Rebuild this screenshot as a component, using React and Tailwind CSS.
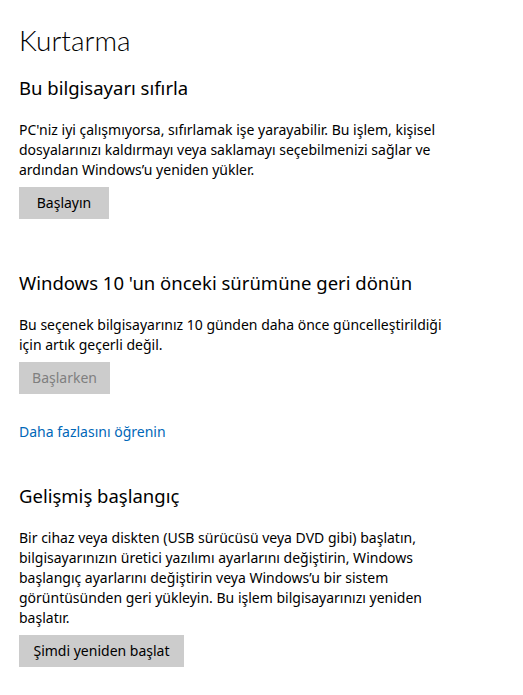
import React from 'react';

const font = { fontFamily: '"Noto Sans", "Open Sans", sans-serif' };

const Section = ({ title, lines, button, buttonWidth, disabled, className = '' }) => (
  <section className={className}>
    <h2 className="text-[18.5px] leading-[28px] text-[#000]">{title}</h2>
    <p className="mt-[18px] text-[14px] leading-[20px] text-[#000] whitespace-nowrap">
      {lines.map((l, i) => (
        <React.Fragment key={i}>
          {l}
          {i < lines.length - 1 && <br />}
        </React.Fragment>
      ))}
    </p>
    <button
      disabled={disabled}
      className={`mt-[7px] h-[32px] bg-[#cccccc] text-[14px] leading-[20px] text-center ${buttonWidth} ${
        disabled ? 'text-[#7f7f7f]' : 'text-[#000]'
      }`}
    >
      {button}
    </button>
  </section>
);

export default function App() {
  return (
    <div className="min-h-[695px] w-[523px] bg-white pl-[19px] pt-[22px]" style={font}>
      <h1
        className="text-[28px] leading-[36px] font-light text-[#000]"
        style={{ fontFamily: 'Lato, "Noto Sans", sans-serif' }}
      >
        Kurtarma
      </h1>

      <Section
        className="mt-[16px]"
        title="Bu bilgisayarı sıfırla"
        lines={[
          "PC'niz iyi çalışmıyorsa, sıfırlamak işe yarayabilir. Bu işlem, kişisel",
          'dosyalarınızı kaldırmayı veya saklamayı seçebilmenizi sağlar ve',
          'ardından Windows’u yeniden yükler.',
        ]}
        button="Başlayın"
        buttonWidth="w-[90px]"
      />

      <Section
        className="mt-[50px]"
        title="Windows 10 'un önceki sürümüne geri dönün"
        lines={[
          'Bu seçenek bilgisayarınız 10 günden daha önce güncelleştirildiği',
          'için artık geçerli değil.',
        ]}
        button="Başlarken"
        buttonWidth="w-[91px]"
        disabled
      />

      <a href="#" className="mt-[28px] block w-fit text-[14px] leading-[20px] text-[#0067b8]">
        Daha fazlasını öğrenin
      </a>

      <Section
        className="mt-[40px]"
        title="Gelişmiş başlangıç"
        lines={[
          'Bir cihaz veya diskten (USB sürücüsü veya DVD gibi) başlatın,',
          'bilgisayarınızın üretici yazılımı ayarlarını değiştirin, Windows',
          'başlangıç ayarlarını değiştirin veya Windows’u bir sistem',
          'görüntüsünden geri yükleyin. Bu işlem bilgisayarınızı yeniden',
          'başlatır.',
        ]}
        button="Şimdi yeniden başlat"
        buttonWidth="w-[165px]"
      />
    </div>
  );
}
